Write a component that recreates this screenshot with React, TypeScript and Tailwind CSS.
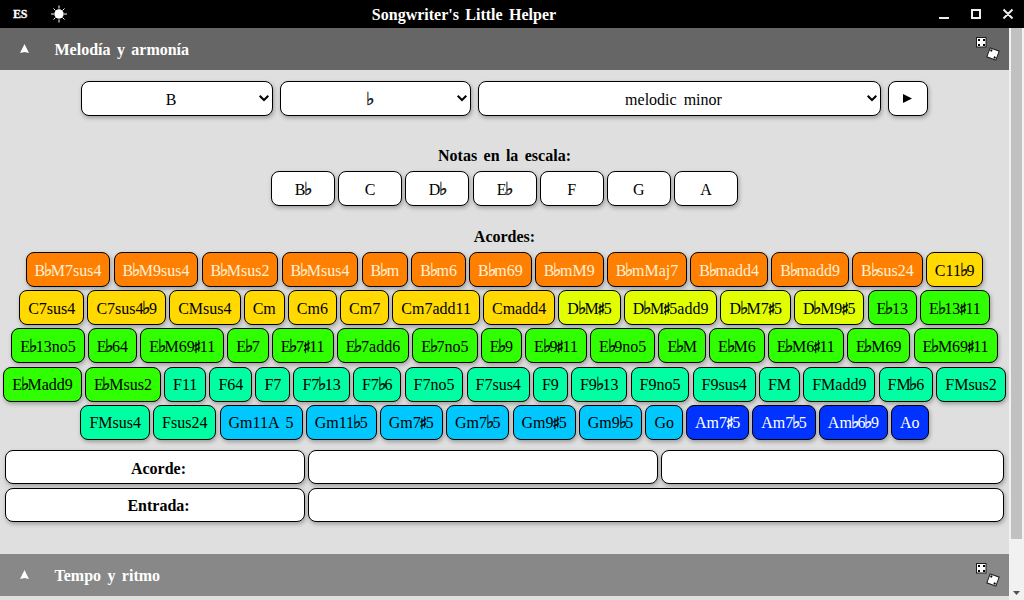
import React from "react";

const tones = {
  orange: "bg-[#ff8000] text-[#fff0d8]",
  gold: "bg-[#ffd900] text-black",
  lime: "bg-[#e1ff00] text-black",
  green: "bg-[#2fff00] text-black",
  mint: "bg-[#00ffa2] text-black",
  sky: "bg-[#00c8ff] text-black",
  blue: "bg-[#0033ff] text-white",
};

type Tone = keyof typeof tones;

const rows: [Tone, string[]][][] = [
  [
    ["orange", ["B♭M7sus4", "B♭M9sus4", "B♭Msus2", "B♭Msus4", "B♭m", "B♭m6", "B♭m69", "B♭mM9", "B♭mMaj7", "B♭madd4", "B♭madd9", "B♭sus24"]],
    ["gold", ["C11♭9"]],
  ],
  [
    ["gold", ["C7sus4", "C7sus4♭9", "CMsus4", "Cm", "Cm6", "Cm7", "Cm7add11", "Cmadd4"]],
    ["lime", ["D♭M♯5", "D♭M♯5add9", "D♭M7♯5", "D♭M9♯5"]],
    ["green", ["E♭13", "E♭13♯11"]],
  ],
  [["green", ["E♭13no5", "E♭64", "E♭M69♯11", "E♭7", "E♭7♯11", "E♭7add6", "E♭7no5", "E♭9", "E♭9♯11", "E♭9no5", "E♭M", "E♭M6", "E♭M6♯11", "E♭M69", "E♭M69♯11"]]],
  [
    ["green", ["E♭Madd9", "E♭Msus2"]],
    ["mint", ["F11", "F64", "F7", "F7♭13", "F7♭6", "F7no5", "F7sus4", "F9", "F9♭13", "F9no5", "F9sus4", "FM", "FMadd9", "FM♭6", "FMsus2"]],
  ],
  [
    ["mint", ["FMsus4", "Fsus24"]],
    ["sky", ["Gm11A 5", "Gm11♭5", "Gm7♯5", "Gm7♭5", "Gm9♯5", "Gm9♭5", "Go"]],
    ["blue", ["Am7♯5", "Am7♭5", "Am♭6♭9", "Ao"]],
  ],
];

const box = "rounded-lg border border-black shadow-[1px_2px_4px_rgba(0,0,0,0.3)] [word-spacing:3px]";

function Music({ text }: { text: string }) {
  return (
    <span>
      {text.split(/([♭♯])/).map((part, i) =>
        part === "♭" ? (
          <span key={i} className="inline-flex w-[5.55px] justify-center text-[17.5px] leading-[10px] [-webkit-text-stroke:0.3px_currentColor]">♭</span>
        ) : part === "♯" ? (
          <span key={i} className="relative top-px inline-flex w-[5.1px] justify-center text-[17px] leading-[10px] [font-family:'DejaVu_Sans_Condensed',sans-serif] [-webkit-text-stroke:0.5px_currentColor]">♯</span>
        ) : (
          part
        )
      )}
    </span>
  );
}

function Select({ value, width }: { value: string; width: string }) {
  return (
    <button className={`${box} ${width} relative flex h-[35px] items-center justify-center bg-white pr-3 pt-0.5`}>
      <Music text={value} />
      <svg className="absolute right-[3px] top-[12px] h-[8px] w-[11px]" viewBox="0 0 11 8" fill="none" stroke="black" strokeWidth="2">
        <path d="M1.7 1.8 6 6 10.300 1.8" />
      </svg>
    </button>
  );
}

function Dice() {
  return (
    <svg className="h-[26px] w-[26px]" viewBox="0 0 26 26">
      <rect x="1.5" y="1.5" width="9.5" height="9.5" fill="white" stroke="#1c1c1c" />
      <path d="M3 3h2v2H3zM8 3h2v2H8zM3 8h2v2H3zM8 8h2v2H8z" fill="black" />
      <g transform="rotate(20 18 18)">
        <rect x="13.2" y="13.2" width="9.6" height="9.6" fill="white" stroke="#1c1c1c" />
        <path d="M14.2 14.2h2v2h-2zM19.8 19.8h2v2h-2z" fill="black" />
      </g>
    </svg>
  );
}

function SectionBar({ title, tone }: { title: string; tone: string }) {
  return (
    <div className={`${tone} flex h-[42px] shrink-0 items-center pl-5 pr-[8px] font-bold text-white`}>
      <svg className="mb-px h-[9px] w-[9px]" viewBox="0 0 9 9" fill="white">
        <path d="M4.5 0 9 9 4.500 8 0 9z" />
      </svg>
      <span className="ml-[25.5px] grow pt-0.5">{title}</span>
      <Dice />
    </div>
  );
}

export default function App() {
  return (
    <div className="flex h-[600px] w-[1024px] flex-col overflow-hidden bg-[#dfdfdf] text-base leading-[18px] text-black [font-family:'Liberation_Serif',serif] [word-spacing:2.4px]">
      <header className="flex h-7 shrink-0 items-center bg-black font-bold text-white">
        <div className="flex w-[200px] items-center pl-[13px]">
          <span className="w-[15px] text-xs [-webkit-text-stroke:0.3px_currentColor] tracking-[-0.2px]">ES</span>
          <svg className="ml-[22px] h-[18px] w-[18px]" viewBox="0 0 18 18" stroke="white" fill="white">
            <circle cx="9" cy="9" r="4.700" stroke="none" />
            <path d="M9 .5v3M9 14.5v3M1 9h3M14 9h3M3.500 3.500l2 2M12.500 12.500l2 2M14.500 3.500l-2 2M5.500 12.500l-2 2" strokeWidth="1" />
          </svg>
        </div>
        <h1 className="w-[528px] pt-0.5 text-center">Songwriter's Little Helper</h1>
        <svg className="ml-auto mr-2 h-7 w-[80px]" viewBox="0 0 80 28" fill="none" stroke="#eeeeee" strokeWidth="2">
          <path d="M3 18h10M36 10h8v8h-8zM67.5 9.500l9 9M76.500 9.500l-9 9" />
        </svg>
      </header>
      <div className="flex min-h-0 grow">
        <main className="flex w-[1009px] flex-col">
          <SectionBar title="Melodía y armonía" tone="bg-[#666666]" />
          <section className="flex h-[484px] shrink-0 flex-col items-center">
            <div className="mt-[11px] flex gap-[7px]">
              <Select value="B" width="w-[192px]" />
              <Select value="♭" width="w-[191px]" />
              <Select value="melodic minor" width="w-[403px]" />
              <button className={`${box} flex h-[35px] w-10 items-center justify-center bg-white pr-px`}>
                <svg className="h-[9px] w-[9px]" viewBox="0 0 9 9">
                  <path d="M0 0 9 4.5 0 9z" />
                </svg>
              </button>
            </div>
            <h2 className="mt-[31px] font-bold">Notas en la escala:</h2>
            <div className="mt-[6px] flex gap-[3.2px]">
              {["B♭", "C", "D♭", "E♭", "F", "G", "A"].map((n) => (
                <button key={n} className={`${box} h-[35px] w-16 bg-white pt-0.5`}><Music text={n} /></button>
              ))}
            </div>
            <h2 className="mt-[22px] font-bold">Acordes:</h2>
            <div className="mt-[6px] flex h-[188px] flex-col items-center gap-[3.24px]">
              {rows.map((row, i) => (
                <div key={i} className="flex gap-[3.1px] whitespace-nowrap">
                  {row.flatMap(([tone, names]) =>
                    names.map((name, j) => (
                      <button key={`${name}-${j}`} className={`${box} ${tones[tone]} h-[35px] px-2 pt-0.5`}><Music text={name} /></button>
                    ))
                  )}
                </div>
              ))}
            </div>
            <div className="mt-[10px] flex flex-col gap-1 font-bold">
              <div className="flex gap-[3px]">
                <div className={`${box} h-[34px] w-[300px] bg-white pl-[7px] pt-[9px] text-center`}>Acorde:</div>
                <div className={`${box} h-[34px] w-[350px] bg-white`} />
                <div className={`${box} h-[34px] w-[343px] bg-white`} />
              </div>
              <div className="flex gap-[3px]">
                <div className={`${box} h-[34px] w-[300px] bg-white pl-[7px] pt-[8px] text-center`}>Entrada:</div>
                <div className={`${box} h-[34px] w-[696px] bg-white`} />
              </div>
            </div>
          </section>
          <SectionBar title="Tempo y ritmo" tone="bg-[#888888]" />
        </main>
        <aside className="flex w-[15px] flex-col items-center justify-between bg-[#f1f1f1] pb-[5px]">
          <div className="h-[511px] w-[11px] bg-[#c1c1c1]" />
          <svg className="h-1 w-[7px]" viewBox="0 0 7 4" fill="#505050">
            <path d="M0 0h7L3.500 4z" />
          </svg>
        </aside>
      </div>
    </div>
  );
}
